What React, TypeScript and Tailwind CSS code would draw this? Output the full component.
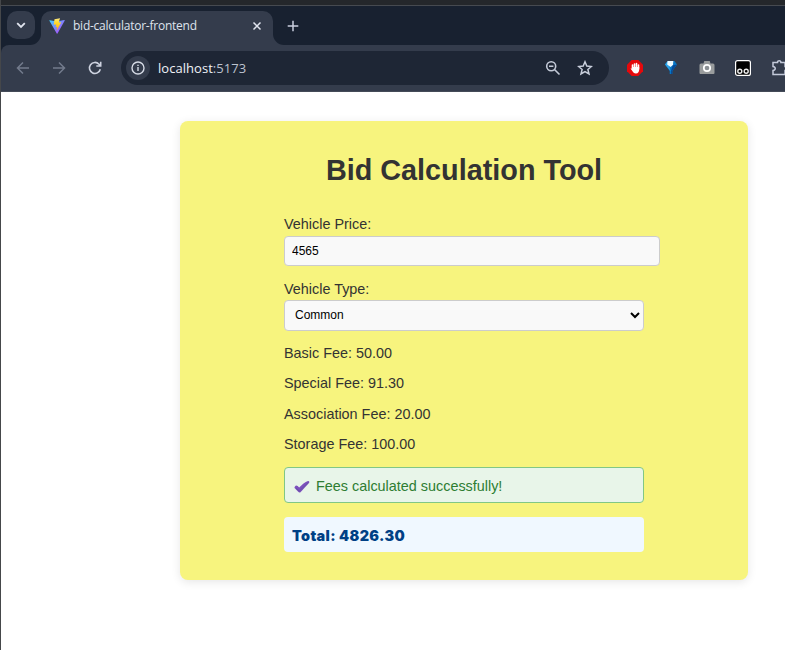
import React from 'react';

const fees = [
  { label: 'Basic Fee', value: '50.00' },
  { label: 'Special Fee', value: '91.30' },
  { label: 'Association Fee', value: '20.00' },
  { label: 'Storage Fee', value: '100.00' },
];

function TabStrip() {
  return (
    <div className="flex h-[39px] bg-[#182130] pt-[5px]">
      <div className="h-[34px] w-10 shrink-0 bg-[#343c4c]">
        <div className="h-full rounded-br-[11px] bg-[#182130] pl-[6px]">
          <div className="flex size-7 items-center justify-center rounded-[10px] bg-[#343c4c]">
            <svg width="10" height="7" viewBox="0 0 10 7" fill="none" stroke="#e1e5ef" strokeWidth="1.8"><path d="M1.2 1.2 5 5 8.8 1.2" /></svg>
          </div>
        </div>
      </div>
      <div className="flex h-[34px] w-[232px] items-center rounded-t-[10px] bg-[#343c4c] pl-2 pb-1">
        <svg width="16" height="16" viewBox="0 0 32 32" className="shrink-0">
          <defs>
            <linearGradient id="va" x1="0" y1="0" x2="1" y2="1"><stop stopColor="#41d1ff" /><stop offset="1" stopColor="#bd34fe" /></linearGradient>
            <linearGradient id="vb" x1="0" y1="0" x2="0" y2="1"><stop stopColor="#ffea83" /><stop offset=".3" stopColor="#ffdd35" /><stop offset="1" stopColor="#ffa800" /></linearGradient>
          </defs>
          <path fill="url(#va)" d="M31.3 5.5 17 31a.9.9 0 0 1-1.5 0L.8 5.5c-.4-.7.2-1.4.9-1.2L16 6.8l14.4-2.6c.8-.1 1.3.6.9 1.3Z" />
          <path fill="url(#vb)" d="M22 .5 11 2.7l-1.5 11 5-.9-1.2 5.5 3.2-.7L15 26l9.5-17.6-5 .8L22 .5Z" />
        </svg>
        <span className="ml-2 w-[124px] whitespace-nowrap font-['Open_Sans',sans-serif] text-[12px] leading-4 tracking-[-0.24px] text-[#dfe3ec]">bid-calculator-frontend</span>
        <svg className="ml-[55px]" width="10" height="10" viewBox="0 0 10 10" stroke="#e1e5ef" strokeWidth="1.5"><path d="m1.5 1.5 7 7M8.5 1.5l-7 7" /></svg>
      </div>
      <div className="h-[34px] w-3 bg-[#343c4c]"><div className="h-full rounded-bl-[11px] bg-[#182130]" /></div>
      <svg className="ml-[2px] mt-[9px]" width="12" height="12" viewBox="0 0 12 12" stroke="#c9cede" strokeWidth="1.5"><path d="M6 .7v10.6M.7 6h10.6" /></svg>
    </div>
  );
}

function Toolbar() {
  return (
    <div className="flex h-[47px] items-center overflow-hidden rounded-tl-lg border-b border-[#444b58] bg-[#343c4c]">
      <svg className="ml-[15px] shrink-0" width="14" height="14" viewBox="0 0 14 14" fill="none" stroke="#737b8c" strokeWidth="1.5"><path d="M13 7H2M7 1.5 1.5 7 7 12.5" /></svg>
      <svg className="ml-[22px] shrink-0" width="14" height="14" viewBox="0 0 14 14" fill="none" stroke="#737b8c" strokeWidth="1.5"><path d="M1 7h11M7 1.5 12.5 7 7 12.5" /></svg>
      <svg className="ml-[22px] shrink-0" width="14" height="14" viewBox="0 0 14 14" fill="none" stroke="#cdd2df" strokeWidth="1.6"><path d="M12.3 8.2A5.5 5.5 0 1 1 11 3.2L12.6 5M12.7.8V5H8.3" /></svg>
      <div className="ml-[19px] flex h-[34px] w-[488px] shrink-0 items-center rounded-full bg-[#1e2635] pl-[5px]">
        <div className="flex size-6 items-center justify-center rounded-full bg-[#343c4c]">
          <svg width="14" height="14" viewBox="0 0 14 14" fill="none" stroke="#d5dae5" strokeWidth="1.4"><circle cx="7" cy="7" r="6" /><path d="M7 6v4M7 3.7v1.4" /></svg>
        </div>
        <span className="ml-[8px] w-[103px] whitespace-nowrap font-['Open_Sans',sans-serif] text-[13px] leading-5 tracking-[0.04px] text-[#f0f2f7]">localhost<span className="text-[#bdc3d0]">:5173</span></span>
        <svg className="ml-[284px] shrink-0" width="16" height="16" viewBox="0 0 16 16" fill="none" stroke="#c3c9d7" strokeWidth="1.6"><circle cx="6.2" cy="6.2" r="4.5" /><path d="m9.5 9.5 5 5M4 6.2h4.4" /></svg>
        <svg className="ml-4 shrink-0" width="16" height="16" viewBox="0 0 16 16" fill="none" stroke="#c8cedb" strokeWidth="1.5"><path d="m8 1.8 1.8 4.3 4.6.4-3.5 3 1.1 4.5L8 11.6 4 14l1.1-4.5-3.5-3 4.6-.4Z" /></svg>
      </div>
      <svg className="ml-[18px] shrink-0" width="16" height="16" viewBox="0 0 16 16"><path fill="#e5090c" d="M4.7 0h6.6L16 4.7v6.6L11.3 16H4.7L0 11.3V4.7Z" /><path d="M5.5 8V5m2-1v4m2-4.5V8m2-3v4" stroke="#fff" strokeWidth="1.6" strokeLinecap="round" /><path fill="#fff" d="M4.8 7h7.4v2.5c0 2.2-1 4-3.3 4-2 0-2.7-1.2-3.4-2.2L3.7 8.7c.2-.8 1-.6 1.6.2Z" /></svg>
      <svg className="ml-5 shrink-0" width="16" height="16" viewBox="0 0 16 16"><path fill="#0876c5" d="M4.5 1h7L14 4.5 9.3 11v3h-2.6v-3L2 4.5Z" /><path fill="#2ca5ea" d="m2 4.5 2.5-3.2 1.5 4L7.5 11Z" /><path fill="#effbff" d="M4.5 1h5.8L10 5 7.5 7 4.2 4.5Z" /><path fill="#064c9a" d="m14 4.5-4.2.7L8 11v3h1.3v-3Z" /></svg>
      <svg className="ml-5 shrink-0" width="16" height="16" viewBox="0 0 16 16"><path fill="#999c9d" d="M2 3.5h2.5L5.3 1h5.4l.8 2.5H14q1.5 0 1.5 1.5v8q0 1-1 1h-13q-1 0-1-1V5q0-1.5 1.5-1.5Z" /><circle cx="8" cy="8" r="3.2" fill="#8b9094" stroke="#fff" strokeWidth="1.7" /></svg>
      <svg className="ml-5 shrink-0" width="16" height="16" viewBox="0 0 16 16"><rect x=".6" y=".6" width="14.8" height="14.8" rx="2" fill="#000" stroke="#fff" strokeWidth="1.2" /><g fill="#000" stroke="#eee" strokeWidth="1.4"><circle cx="4.8" cy="11.3" r="2" /><circle cx="11.2" cy="11.3" r="2" /></g></svg>
      <svg className="ml-5 shrink-0" width="18" height="18" viewBox="0 0 18 18" fill="none" stroke="#c3c9d9" strokeWidth="1.5"><path d="M2 3.5h4.5c0-2.4 3.4-2.4 3.4 0H14v4c3 0 3 4 0 4v4H2v-4c3-.5 3-3.5 0-4Z" /></svg>
    </div>
  );
}

export default function App() {
  return (
    <div className="h-[650px] w-[785px] overflow-hidden border-l border-[#45474a] bg-white font-['Liberation_Sans',Arial,sans-serif]">
      <header className="rounded-tl-lg bg-[#182130]">
        <div className="h-[6px] border-b border-[#464a50] bg-[#24272b]" />
        <TabStrip />
        <Toolbar />
      </header>
      <main className="ml-[179px] mt-[29.4px] h-[458.6px] w-[568px] rounded-lg bg-[#f7f47e] px-[104px] pt-[30.6px] text-[14.4px] leading-[17px] text-[#333] shadow-[0_2px_10px_rgba(0,0,0,0.1)]">
        <h1 className="text-center text-[28.8px] font-bold leading-[36px]">Bid Calculation Tool</h1>
        <label className="mt-[28px] block">Vehicle Price:</label>
        <input className="mt-[3px] block h-[30px] w-[376px] rounded border border-[#ccc] bg-[#f9f9f9] px-[7px] text-[12px] text-black" defaultValue="4565" />
        <label className="mt-[15px] block">Vehicle Type:</label>
        <select className="mt-[2px] block h-[31px] w-[360px] rounded border border-[#ccc] bg-[#f9f9f9] px-[6px] text-[12px] text-black" defaultValue="Common">
          <option>Common</option>
          <option>Luxury</option>
        </select>
        <div className="mt-[14px] flex flex-col gap-[13.4px]">
          {fees.map((fee) => <p key={fee.label}>{fee.label}: {fee.value}</p>)}
        </div>
        <div className="mt-[13.8px] flex h-9 w-[360px] items-center rounded border border-[#81c784] bg-[#e8f5e9] pl-[9px] text-[#2e7d32]">
          <svg className="mt-[5px]" width="16" height="14" viewBox="0 0 16 14"><path fill="#7d50bd" d="M1 6.4c1-1.4 2.5-.9 4.2 1.2C8 4.6 11 1.9 14 1c1.2-.2 1.8 1 1 2-3.2 3.4-5.8 6.2-8.3 9-.8.8-1.8.7-2.5-.2L.8 8.3C.3 7.5.4 7 1 6.4Z" /><path d="M2 8.2 5.3 11l9-8.5" fill="none" stroke="#6554a5" strokeWidth="1" /></svg>
          <span className="ml-[6px] mt-[4px]">Fees calculated successfully!</span>
        </div>
        <div className="mt-[14px] flex h-[35px] w-[360px] items-center rounded bg-[#f0f8ff] pl-2 pt-[3px] font-['Inter','Liberation_Sans',sans-serif] text-[14.4px] font-black tracking-[0.35px] text-[#004085]">Total: 4826.30</div>
      </main>
    </div>
  );
}
